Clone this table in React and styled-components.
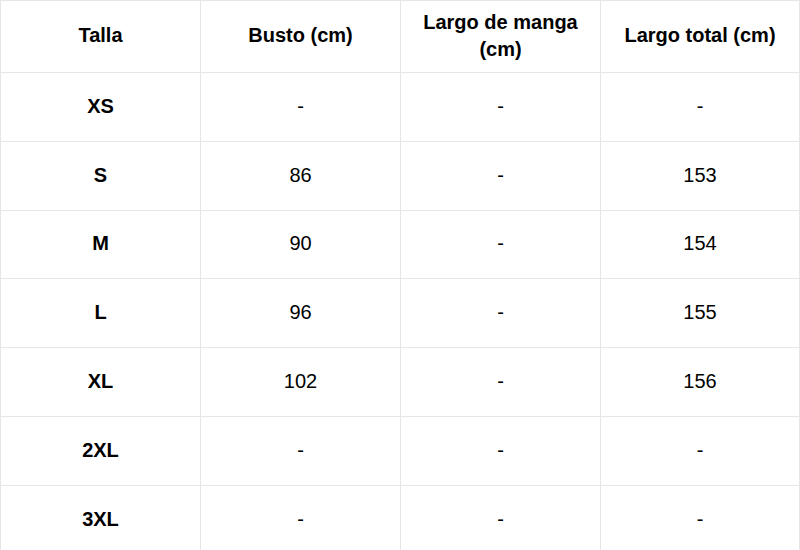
import React from "react";
import styled, { createGlobalStyle } from "styled-components";

const Global = createGlobalStyle`
  html, body { margin: 0; padding: 0; background: #fff; }
  body { font-family: "Liberation Sans", Arial, sans-serif; }
`;

const Grid = styled.div`
  display: grid;
  grid-template-columns: 200px 200px 200px 199px;
  grid-template-rows: 72px 69px 69px 68px 69px 69px 69px 69px;
  width: 800px;
  border-top: 1px solid #e6e6e6;
  border-left: 1px solid #e6e6e6;
  box-sizing: border-box;
`;

const Cell = styled.div`
  box-sizing: border-box;
  border-right: 1px solid #e6e6e6;
  border-bottom: 1px solid #e6e6e6;
  display: flex;
  align-items: center;
  justify-content: center;
  text-align: center;
  padding: 0 10px 2px;
  font-size: 20px;
  line-height: 27px;
  color: #000;
  font-weight: ${(p) => (p.$bold ? 700 : 400)};
`;

const headers = ["Talla", "Busto (cm)", "Largo de manga (cm)", "Largo total (cm)"];
const rows = [
  ["XS", "-", "-", "-"],
  ["S", "86", "-", "153"],
  ["M", "90", "-", "154"],
  ["L", "96", "-", "155"],
  ["XL", "102", "-", "156"],
  ["2XL", "-", "-", "-"],
  ["3XL", "-", "-", "-"],
];

export default function App() {
  return (
    <>
      <Global />
      <Grid>
        {headers.map((h) => (
          <Cell key={h} $bold>
            {h}
          </Cell>
        ))}
        {rows.map((r) =>
          r.map((v, i) => (
            <Cell key={r[0] + i} $bold={i === 0}>
              {v}
            </Cell>
          ))
        )}
      </Grid>
    </>
  );
}
